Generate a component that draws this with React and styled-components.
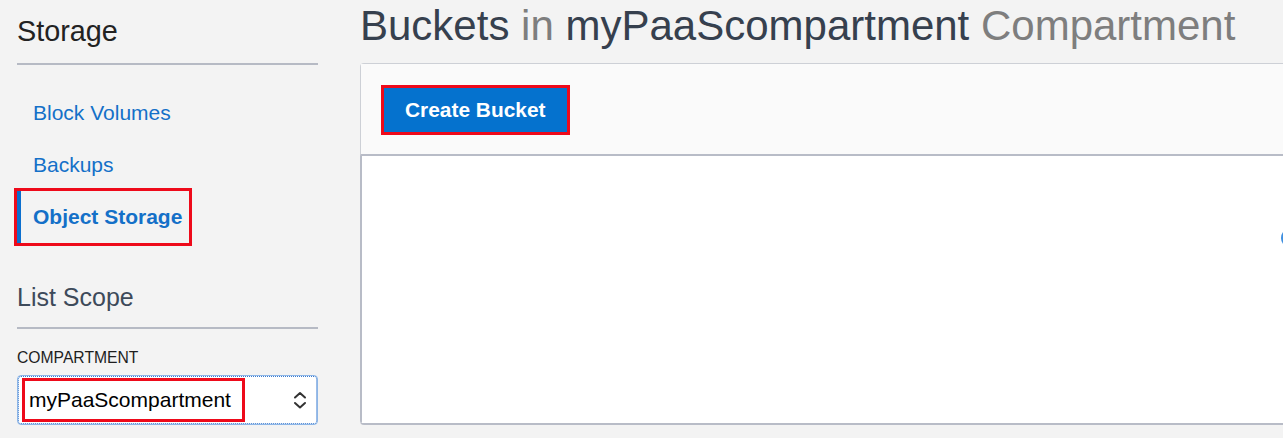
import React from 'react'
import styled, { createGlobalStyle } from 'styled-components'

const GlobalStyle = createGlobalStyle`
    html, body {
        margin: 0;
        padding: 0;
        background: #f3f3f3;
        font-family: "Liberation Sans", Arial, sans-serif;
        overflow: hidden;
    }
`

const navItems = [
    { id: 1, name: 'Block Volumes' },
    { id: 2, name: 'Backups' },
    { id: 3, name: 'Object Storage', active: true }
]

function App() {
    return (
        <Page>
            <GlobalStyle />
            <Sidebar>
                <SidebarHeading>Storage</SidebarHeading>
                <NavList>
                    {navItems.map((item) => (
                        <NavItem key={item.id} $active={item.active}>{item.name}</NavItem>
                    ))}
                </NavList>
                <ScopeHeading>List Scope</ScopeHeading>
                <FieldLabel>COMPARTMENT</FieldLabel>
                <SelectBox>
                    <SelectValue>myPaaScompartment</SelectValue>
                    <svg width="14" height="20" viewBox="0 0 14 20" fill="none">
                        <path d="M2 7.5 L7 3 L12 7.5" stroke="#333" strokeWidth="2" strokeLinecap="round" strokeLinejoin="round" />
                        <path d="M2 13 L7 17.5 L12 13" stroke="#333" strokeWidth="2" strokeLinecap="round" strokeLinejoin="round" />
                    </svg>
                </SelectBox>
            </Sidebar>
            <Main>
                <Title>
                    Buckets <Muted>in</Muted> myPaaScompartment <Muted>Compartment</Muted>
                </Title>
                <Panel>
                    <PanelHeader>
                        <PrimaryButton>Create Bucket</PrimaryButton>
                    </PanelHeader>
                    <PanelBody>
                        <Spinner />
                    </PanelBody>
                </Panel>
            </Main>
        </Page>
    )
}

export default App

const Page = styled.div`
    display: flex;
    align-items: flex-start;
    width: 1283px;
    height: 438px;
    overflow: hidden;
`

//SIDEBAR
const Sidebar = styled.div`
    flex: 0 0 301px;
    margin-left: 17px;
    padding-top: 15px;
    display: flex;
    flex-direction: column;
    align-items: stretch;
`

const SidebarHeading = styled.div`
    font-size: 28.8px;
    line-height: 32px;
    color: #222;
    padding-bottom: 16px;
    border-bottom: 2px solid #b6bac4;
`

const NavList = styled.div`
    display: flex;
    flex-direction: column;
    align-items: flex-start;
    margin-top: 22px;
`

const NavItem = styled.div`
    height: 52px;
    line-height: 52px;
    font-size: 21px;
    color: #1470c8;
    padding: 0 7px 0 ${p => p.$active ? '12px' : '16px'};
    font-weight: ${p => p.$active ? 'bold' : 'normal'};
    border-left: ${p => p.$active ? '4px solid #0b6fce' : 'none'};
    outline: ${p => p.$active ? '3px solid #ee0a1a' : 'none'};
`

const ScopeHeading = styled.div`
    margin-top: 39px;
    font-size: 25px;
    line-height: 30px;
    color: #3d4a5a;
    padding-bottom: 15px;
    border-bottom: 2px solid #b6bac4;
`

const FieldLabel = styled.div`
    margin-top: 20px;
    font-size: 15.7px;
    line-height: 18px;
    color: #1e1e1e;
`

const SelectBox = styled.div`
    margin-top: 8px;
    height: 50px;
    box-sizing: border-box;
    display: flex;
    align-items: center;
    justify-content: space-between;
    padding: 0 10px 0 4px;
    background: #fff;
    border: 1px solid #8cb5e6;
    outline: 1px dotted #3b7bd0;
    outline-offset: -2px;
    border-radius: 4px;
`

const SelectValue = styled.span`
    font-size: 21px;
    line-height: 38px;
    color: #000;
    padding: 0 11px 0 4px;
    border: 3px solid #ee0a1a;
`

//MAIN
const Main = styled.div`
    flex: 0 0 auto;
    margin-left: 42px;
    padding-top: 2px;
    display: flex;
    flex-direction: column;
`

const Title = styled.h1`
    margin: 0;
    font-size: 42px;
    font-weight: normal;
    line-height: 48px;
    color: #36404e;
    white-space: nowrap;
`

const Muted = styled.span`
    color: #7e7e7e;
`

const Panel = styled.div`
    margin-top: 13px;
    width: 950px;
    border-radius: 4px 0 0 4px;
    overflow: hidden;
    border-bottom: 2px solid #b8bcc7;
`

const PanelHeader = styled.div`
    height: 93px;
    box-sizing: border-box;
    padding: 24px 23px 0;
    background: #fafafa;
    border-top: 1px solid #cdd0d6;
    border-left: 1px solid #cdd0d6;
    border-bottom: 2px solid #b8bcc7;
`

const PrimaryButton = styled.button`
    height: 44px;
    padding: 0 21px;
    border: none;
    background: #0572ce;
    color: #fff;
    font-family: "Liberation Sans", Arial, sans-serif;
    font-size: 20.9px;
    font-weight: bold;
    outline: 3px solid #ee0a1a;
    cursor: pointer;
`

const PanelBody = styled.div`
    position: relative;
    height: 267px;
    background: #fff;
    border-left: 2px solid #b8bcc7;
`

const Spinner = styled.div`
    position: absolute;
    left: 919px;
    top: 72px;
    width: 20px;
    height: 20px;
    box-sizing: border-box;
    border-radius: 50%;
    border: 3px solid transparent;
    border-left-color: #3f8fe0;
`
